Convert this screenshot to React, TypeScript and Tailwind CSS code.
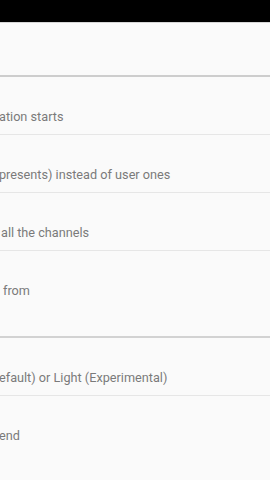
export default function App() {
  const rows = [
    { text: "ation starts", shift: "-ml-[1px]", h: "h-[57px]", thick: false },
    { text: "presents) instead of user ones", shift: "-ml-[1px]", h: "h-[57px]", thick: false },
    { text: "all the channels", shift: "ml-[1px]", h: "h-[57px]", thick: false },
    { text: "from", shift: "ml-[3px]", h: "h-[85px]", thick: true },
    { text: "efault) or Light (Experimental)", shift: "-ml-[1px]", h: "h-[57px]", thick: false },
    { text: "end", shift: "-ml-[1px]", h: "h-[90px]", thick: false },
  ];

  return (
    <div className="w-[270px] h-[480px] overflow-hidden bg-[#fafafa] font-['Roboto',sans-serif]">
      {/* status bar */}
      <div className="h-[22px] bg-black" />
      <div className="h-[1px] bg-[#d6d6d6]" />
      {/* toolbar, title scrolled off */}
      <div className="h-[52px] bg-[#fafafa]" />
      <div className="h-[2px] bg-[#cdcdcd]" />

      {rows.map((r, i) => (
        <div key={i}>
          <div className={`${r.h} pt-[31px] overflow-hidden`}>
            <p className={`${r.shift} whitespace-nowrap text-[12.7px] leading-[18px] text-[#7a7a7a]`}>
              {r.text}
            </p>
          </div>
          {r.thick ? (
            <div className="h-[2px] bg-[#d2d2d2]" />
          ) : (
            <div className="h-[1px] bg-[#e6e6e6]" />
          )}
        </div>
      ))}
    </div>
  );
}
